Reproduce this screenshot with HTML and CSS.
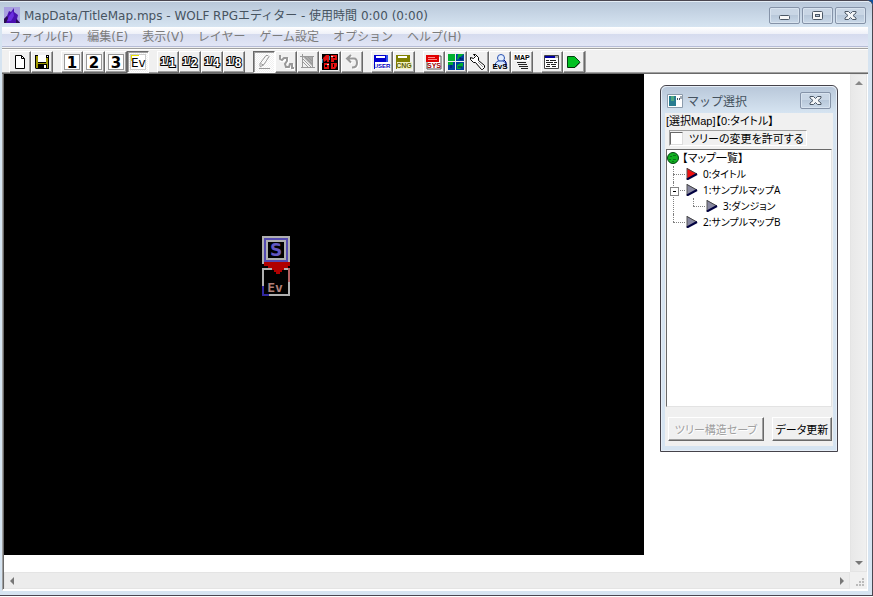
FILE: index.html
```html
<!DOCTYPE html>
<html lang="ja">
<head>
<meta charset="utf-8">
<title>WOLF RPGエディター</title>
<link rel="stylesheet" href="styles.css">
</head>
<body>
<svg class="defs" aria-hidden="true">
  <symbol id="page-arrow" viewBox="0 0 12 12">
    <path d="M1 0v12L11 6z" fill="currentColor"/>
    <path d="M1 0v12" stroke="#555" stroke-width="1"/>
    <path d="M1 0.500L11 6" stroke="#444" stroke-width="1"/>
    <path d="M1 11.500L11 6" stroke="#000040" stroke-width="2"/>
  </symbol>
  <symbol id="close-mark" viewBox="0 0 13 9">
    <path d="M1 .5h3.500l2 2 2-2H12v1.500L9 4.500l3 2.500v1.500H8.500l-2-2-2 2H1V7l3-2.500L1 2z" fill="#f4f6f8" stroke="#4c5866"/>
  </symbol>
</svg>
<div class="window">
  <header class="titlebar">
    <svg class="app-icon" viewBox="0 0 16 16">
      <rect width="16" height="16" fill="#a9a0e0"/>
      <path d="M0 16V12l3-3 2-5 2 1 3-4v4l4 3-1 4 3 4z" fill="#4a10b0"/>
      <path d="M5 9l4-5 1 5-3 5H3z" fill="#6a2de0"/>
      <path d="M0 12l3-3 1 2-2 5H0zM12 12l4 4h-4z" fill="#2a1050"/>
    </svg>
    <h1>MapData/TitleMap.mps - WOLF RPGエディター - 使用時間 0:00 (0:00)</h1>
    <div class="captions">
      <button class="caption" aria-label="最小化"><svg width="13" height="9" viewBox="0 0 13 9"><rect x="1.500" y="4.500" width="10" height="4" rx="1" fill="#f8f8f8" stroke="#4c5866"/></svg></button>
      <button class="caption" aria-label="最大化"><svg width="13" height="9" viewBox="0 0 13 9"><rect x="1.500" y=".5" width="10" height="8" rx="1" fill="#f8f8f8" stroke="#4c5866"/><rect x="4.500" y="3.500" width="4" height="2" fill="#b5c5d8" stroke="#4c5866"/></svg></button>
      <button class="caption" aria-label="閉じる"><svg width="13" height="9"><use href="#close-mark"/></svg></button>
    </div>
  </header>
  <nav class="menubar">
    <a href="#">ファイル(F)</a><a href="#">編集(E)</a><a href="#">表示(V)</a><a href="#">レイヤー</a><a href="#">ゲーム設定</a><a href="#">オプション</a><a href="#">ヘルプ(H)</a>
  </nav>
  <div class="toolbar">
    <div class="group">
      <button class="tool" aria-label="新規"><svg viewBox="0 0 16 16"><path d="M3.500 1.500h6l3 3v10h-9z" fill="#fff" stroke="#000"/><path d="M9.500 1.500v3h3" fill="none" stroke="#000"/></svg></button>
      <button class="tool" aria-label="保存"><svg viewBox="0 0 16 16"><path d="M1 1h14v14H2l-1-1z"/><path d="M2 2h2v7h8V4h2v10H2z" fill="#a09800"/><path d="M4 1h8v7H4z" fill="#fff"/><path d="M4 10h9v5H4z"/><path d="M10 11h2v3h-2zM13 2h1v1h-1z" fill="#fff"/></svg></button>
    </div>
    <div class="group">
      <button class="tool"><span class="digit">1</span></button>
      <button class="tool"><span class="digit">2</span></button>
      <button class="tool"><span class="digit">3</span></button>
      <button class="tool pressed"><span class="digit event">Ev</span></button>
    </div>
    <div class="group">
      <button class="tool"><svg viewBox="0 0 16 16"><text class="scale" x="8" y="11">1/<tspan class="big" dy="2">1</tspan></text></svg></button>
      <button class="tool"><svg viewBox="0 0 16 16"><text class="scale" x="8" y="11">1/<tspan class="big" dy="2">2</tspan></text></svg></button>
      <button class="tool"><svg viewBox="0 0 16 16"><text class="scale" x="8" y="11">1/<tspan class="big" dy="2">4</tspan></text></svg></button>
      <button class="tool"><svg viewBox="0 0 16 16"><text class="scale" x="8" y="11">1/<tspan class="big" dy="2">8</tspan></text></svg></button>
    </div>
    <div class="group">
      <button class="tool pressed" aria-label="鉛筆"><svg viewBox="0 0 16 16"><path d="M3 14.500h11M4 12.500v-3l6-8h2l1 1-5 8-4 2.500M4.500 9.500l3 1.500" fill="none" stroke="#999"/></svg></button>
      <button class="tool" aria-label="直線"><svg viewBox="0 0 16 16"><path d="M2 2v4h3l2-2h2v3l-2 3 1 3h3l1-3h2v4h2" fill="none" stroke="#fff" stroke-width="2" transform="translate(1 1)"/><path d="M2 1v4l2 1 2-2h3v3l-2 3 1 3h3l1-3h2v4h2" fill="none" stroke="#999" stroke-width="2"/></svg></button>
      <button class="tool" aria-label="四角"><svg viewBox="0 0 16 16"><path d="M0 2.500h14M2.500 0v14M12.500 2v12M1 13.500h14" stroke="#999"/><path d="M3 3h9v9z" fill="#aaa"/><path d="M3 5l8 8M3 8l5 5M5 3l7 7M8 3l4 4" stroke="#999"/></svg></button>
      <button class="tool" aria-label="塗りつぶし"><svg viewBox="0 0 16 16"><path d="M0 0h16v16H0z"/><path d="M1 4l3-3h3v7H5V6L2 8zM9 1h6v5h-3v2H9zM2 9h5v6H2zM9 9h6v3l-2 3H9z" fill="#e01010"/><path d="M3 11h2v2H3zM11 3h2v1h-2zM11 10h1v3h-1z"/><path d="M7.500 2v4M.5 5v4" stroke="#28a"/><path d="M9 2h2v1H9zM5 10h2v1H5z" fill="#ddd"/></svg></button>
      <button class="tool" aria-label="元に戻す"><svg viewBox="0 0 16 16"><path d="M3 4.500h7q3 0 3 4.500t-5 4.500M7 1L3 4.500l4 4" fill="none" stroke="#fff" stroke-width="2" transform="translate(1 1)"/><path d="M3 4.500h7q3 0 3 4.500t-5 4.500M7 1L3 4.500l4 4" fill="none" stroke="#999" stroke-width="2"/></svg></button>
    </div>
    <div class="group">
      <button class="tool"><svg viewBox="0 0 16 16"><path d="M0 1h14v14H0z" fill="#0000d0"/><path d="M2 2h9v2H2z" fill="#fff"/><path d="M13 1v8" stroke="#60a0ff"/><path d="M1 8h15v7H1z" fill="#fff"/><text class="tiny blue" x="8" y="14">USER</text></svg></button>
      <button class="tool"><svg viewBox="0 0 16 16"><path d="M0 1h14v14H0z" fill="#808000"/><path d="M2 2h9v2H2z" fill="#fff"/><path d="M1 8h15v7H1z" fill="#f0f0c0"/><text class="tiny olive" x="8" y="14">CNG</text></svg></button>
    </div>
    <div class="group">
      <button class="tool"><svg viewBox="0 0 16 16"><path d="M1 2h14v13H1z" fill="#fff" stroke="#555"/><path d="M0 1h13v7H0z" fill="#e00000"/><path d="M2 3h7v1H2zM2 5h9v1H2z" fill="#f88"/><text class="tiny red" x="8" y="14">SYS</text></svg></button>
      <button class="tool" aria-label="タイルセット"><svg viewBox="0 0 16 16"><path d="M0 0h7v7H0z" fill="#00b030"/><path d="M8 0h8v7H8zM0 8h7v8H0zM8 8h8v8H8z" fill="#0040a0"/><path d="M10 0h6L9 6zM0 8h5v3H0zM9 15v-4l4-2h2v3l-3 3z" fill="#00b030"/><path d="M12 3v2h3M3 14v-3M10 13h4" stroke="#001060" fill="none"/></svg></button>
      <button class="tool" aria-label="ゲーム基本設定"><svg viewBox="0 0 16 16"><path d="M3.500.5h2l3 3v3l6 5v2l-2 2h-1l-6-7h-2l-3-3v-2l3 1 2-2z" fill="#fff" stroke="#000"/><path d="M8 8l5 5" stroke="#999"/></svg></button>
      <button class="tool"><svg viewBox="0 0 16 16"><circle cx="9" cy="4" r="3.500" fill="#e4efff" stroke="#2850b0"/><path d="M3.500 12V9L6 7h5l3 2v4" fill="#d8e7ff" stroke="#2850b0"/><path d="M12 6l2 2v5" stroke="#001080" fill="none"/><text class="tiny evs" x="8" y="15">EvS</text></svg></button>
      <button class="tool"><svg viewBox="0 0 16 16"><path d="M0 0h15v7H0z" fill="#fff"/><text class="tiny" x="8" y="6">MAP</text><path d="M3 8.500h9M4 10.500h9M5 12.500h9M7 14.500h7" stroke="#222"/></svg></button>
    </div>
    <div class="group">
      <button class="tool" aria-label="ログ"><svg viewBox="0 0 16 16"><path d="M.5 1.500h14v13H.5z" fill="#fff" stroke="#444"/><path d="M1 2h10v2H1z" fill="#0000a0"/><path d="M11 2h3v2h-3z" fill="#aaa"/><path d="M2 6.500h3M6 6.500h6M2 8.500h7M10 8.500h3M3 10.500h3M7 10.500h5M2 12.500h4M8 12.500h4" stroke="#222"/></svg></button>
      <button class="tool" aria-label="テストプレイ"><svg viewBox="0 0 16 16"><path d="M1.500 2.500h7l5 5v1l-5 5h-7z" fill="#00c020" stroke="#004010"/><path d="M2 13.500h7l5-5" fill="none" stroke="#003000"/></svg></button>
    </div>
    <span class="rule"></span>
  </div>
  <main class="client">
    <div class="view">
      <div class="map">
        <svg class="sprites" viewBox="0 0 32 64">
          <path d="M2 2h28v28H2z" fill="#b0b0b0"/>
          <path d="M4 4h24v24H4z" fill="#544ab0"/>
          <path d="M6 6h20v20H6z" fill="#b0b0b0"/>
          <path d="M8 8h16v16H8z"/>
          <text class="start" x="16" y="22">S</text>
          <path d="M3 35h26v26H3z" stroke="#b0b0b0" stroke-width="2"/>
          <path d="M3 52v9h6" stroke="#3028a0" stroke-width="2" fill="none"/>
          <path d="M29 34v14" stroke="#b06060" stroke-width="2"/>
          <path d="M4 28h26v4h-2v2h-4v2h-2v2h-2v2h-4v-2h-2v-2h-2v-2H8v-2H4z" fill="#b00000"/>
          <text class="event-mark" x="15" y="58">Ev</text>
        </svg>
      </div>
    </div>
    <div class="scroll vertical"><i class="arrow up"></i><i class="arrow down"></i></div>
    <div class="scroll horizontal"><i class="arrow left"></i><i class="arrow right"></i></div>
    <div class="grip"><svg width="8" height="8" viewBox="0 0 8 8"><path d="M6 0h2v2H6zM6 3h2v2H6zM3 3h2v2H3zM6 6h2v2H6zM3 6h2v2H3zM0 6h2v2H0z" fill="#bbb"/></svg></div>
  </main>
  <section class="dialog">
    <header class="dialog-title">
      <svg class="dialog-icon" viewBox="0 0 16 14"><path d="M.5.5h15v13H.5z" fill="#fff" stroke="#8c9cac"/><path d="M2 2h7v10H2z" fill="#287c90"/><path d="M4 2h3v5H4z" fill="#50a880"/><path d="M10.500 4v2M12.500 4v2M14 2v3" stroke="#456"/></svg>
      <h2>マップ選択</h2>
      <button class="caption" aria-label="閉じる"><svg width="13" height="9"><use href="#close-mark"/></svg></button>
    </header>
    <div class="dialog-body">
      <p class="selected">[選択Map]【0:タイトル】</p>
      <label class="permit"><input type="checkbox">ツリーの変更を許可する</label>
      <div class="tree">
        <div class="root"><svg width="12" height="12" viewBox="0 0 12 12"><circle cx="6" cy="6" r="5.500" fill="#10b020" stroke="#004010"/><path d="M3 4h2v1H3zM6 3h3v1H6zM2 7h2v1H2zM6 7h3v1H6zM5 9h2v1H5z" fill="#087018"/></svg>【マップ一覧】</div>
        <ul>
          <li><div class="node red"><svg class="icon"><use href="#page-arrow"/></svg>0:タイトル</div></li>
          <li><div class="node open"><svg class="icon"><use href="#page-arrow"/></svg>1:サンプルマップA</div>
            <ul><li><div class="node"><svg class="icon"><use href="#page-arrow"/></svg>3:ダンジョン</div></li></ul>
          </li>
          <li><div class="node"><svg class="icon"><use href="#page-arrow"/></svg>2:サンプルマップB</div></li>
        </ul>
      </div>
      <div class="actions">
        <button class="push save" disabled>ツリー構造セーブ</button>
        <button class="push">データ更新</button>
      </div>
    </div>
  </section>
</div>
</body>
</html>
```
FILE: styles.css
```css
* { box-sizing: border-box; }
body {
  margin: 0;
  height: 100vh;
  padding-bottom: 1px;
  overflow: hidden;
  background: linear-gradient(#0a50a0 20px, #fff 20px);
  font-family: "Noto Sans", "Noto Sans CJK JP", sans-serif;
  font-size: 12px;
}
.defs { position: absolute; width: 0; height: 0; }
button { padding: 0; font: inherit; }
h1, h2, p, ul { margin: 0; padding: 0; font-size: 12px; font-weight: normal; }
ul { list-style: none; }

.window {
  position: relative;
  display: flex;
  flex-direction: column;
  height: 100%;
  padding: 0 4px 4px 2px;
  border: solid #4a4650;
  border-width: 1px 1px 1px 0;
  border-radius: 0 6px 0 0;
  background: #d6e4f1;
}
.titlebar, .menubar { font-family: "DejaVu Sans", "Noto Sans CJK JP", sans-serif; }
.titlebar {
  display: flex;
  align-items: center;
  flex: 0 0 26px;
  gap: 4px;
  margin: 0 -4px 0 -2px;
  padding: 0 6px 0 4px;
  border-top: 1px solid #e4edf6;
  border-radius: 0 5px 0 0;
  background: linear-gradient(#b9c8da, #d6e4f1);
  color: #46535f;
}
.titlebar h1 { flex: 1; white-space: nowrap; }
.app-icon { width: 16px; height: 16px; }
.captions { display: flex; gap: 2px; padding-top: 2px; }
.caption {
  display: flex;
  align-items: center;
  justify-content: center;
  width: 31px;
  height: 17px;
  border: 1px solid #8593a8;
  border-radius: 2px;
  background: linear-gradient(#c9d6e5 50%, #b8c8da 50%, #c9d8e8);
  box-shadow: inset 0 0 0 1px #d8e3ef;
}

.menubar {
  display: flex;
  align-items: center;
  flex: 0 0 20px;
  gap: 14px;
  padding: 0 0 2px 7px;
  border-bottom: 1px solid #b6bcd6;
  background: linear-gradient(#fff, #eef0f8 7px, #d5dbee 7px, #e2e6f6);
}
.menubar a { color: #7c7c7c; text-decoration: none; white-space: nowrap; }

.toolbar {
  display: flex;
  align-items: flex-start;
  flex: 0 0 26px;
  gap: 8px;
  padding: 2px 0 0 7px;
  border: solid #a0a0a0;
  border-width: 1px 0;
  border-bottom-color: #696969;
  background: #f0f0f0;
  box-shadow: inset 0 1px #fff, inset 0 -1px #a0a0a0, 0 -1px #f0f0f0;
  margin-top: 1px;
}
.group { display: flex; }
.tool {
  display: flex;
  align-items: center;
  justify-content: center;
  width: 22px;
  height: 22px;
  border: 1px solid;
  border-color: #fff #696969 #696969 #fff;
  background: #f0f0f0;
  box-shadow: inset -1px -1px #a0a0a0;
}
.tool svg { width: 16px; height: 16px; overflow: visible; }
.tool.pressed {
  border-color: #696969 #fff #fff #696969;
  background: repeating-conic-gradient(#fff 0 25%, #f0f0f0 0 50%) 0 0 / 2px 2px;
  box-shadow: inset 1px 1px #a0a0a0;
}
.digit {
  width: 16px;
  height: 16px;
  border: 1px solid #999;
  background: #fff;
  color: #000;
  font: bold 15px/16px "DejaVu Sans", sans-serif;
}
.event {
  border-color: #ccc;
  background: linear-gradient(#e8e000, #e8e000) 0 0 / 8px 1px no-repeat, linear-gradient(#e8e000, #e8e000) 0 0 / 1px 6px no-repeat, #fff;
  font: 12px/16px "DejaVu Sans", sans-serif;
}
.scale {
  fill: #fff;
  stroke: #000;
  stroke-width: 2px;
  paint-order: stroke;
  text-anchor: middle;
  font: bold 10px "Liberation Sans", sans-serif;
}
.big { font-size: 12px; }
.tiny { font: bold 7px "Liberation Sans", sans-serif; text-anchor: middle; }
.blue { fill: #0000c0; font-size: 6px; }
.olive { fill: #606000; }
.red { fill: #a00000; }
.evs { font-size: 8px; }
.rule { align-self: stretch; width: 1px; margin-left: -8px; background: #a0a0a0; }

.client {
  display: grid;
  flex: 1;
  grid-template: 1fr 17px / 1fr 17px;
  min-height: 0;
  padding-left: 1px;
  border: solid #fff;
  border-width: 0 1px 2px;
  border-left-color: #a0a0a0;
  box-shadow: inset 1px 0 #696969;
}
.view { overflow: hidden; background: #fff; }
.map {
  --tile: 32px;
  position: relative;
  width: calc(20 * var(--tile));
  height: calc(15 * var(--tile) + 1px);
  background: #000;
}
.sprites {
  position: absolute;
  left: calc(8 * var(--tile));
  top: calc(5 * var(--tile));
  width: var(--tile);
  height: calc(2 * var(--tile));
  shape-rendering: crispEdges;
}
.start { fill: #6258c0; font: bold 17px "DejaVu Sans", sans-serif; text-anchor: middle; }
.event-mark { fill: #b08078; font: bold 13px "DejaVu Sans Mono", monospace; text-anchor: middle; }
.scroll {
  display: flex;
  align-items: center;
  justify-content: space-between;
  border: 1px solid #e4e4e4;
  background: linear-gradient(90deg, #e8e8e8, #f0f0f0);
}
.vertical { flex-direction: column; padding: 6px 0; }
.horizontal { padding: 0 5px; background: #ececec; }
.arrow { border: 4px solid transparent; }
.up { border-top: 0; border-bottom-color: #888; }
.down { border-bottom: 0; border-top-color: #777; }
.left { border-left: 0; border-right-color: #777; }
.right { border-right: 0; border-left-color: #777; }
.grip { display: flex; align-items: flex-end; justify-content: flex-end; padding: 3px; background: #f0f0f0; }

.dialog {
  position: absolute;
  top: 84px;
  right: 34px;
  width: 178px;
  padding: 0 4px 5px;
  border: 1px solid #45424a;
  border-radius: 6px 6px 0 0;
  background: #d6e4f1;
  box-shadow: inset 0 0 0 1px #e6eef7;
  font-size: 11px;
  font-feature-settings: "palt";
}
.dialog-title {
  display: flex;
  align-items: center;
  gap: 4px;
  height: 27px;
  margin: 0 -3px;
  padding: 1px 5px 0 5px;
  border-top: 1px solid #e6eef7;
  border-radius: 5px 5px 0 0;
  background: linear-gradient(#b9c8da, #d6e4f1);
}
.dialog-title h2 { flex: 1; color: #46535f; font-feature-settings: normal; }
.dialog-icon { width: 16px; height: 14px; }
.dialog-body { padding: 0 1px; background: #f0f0f0; }
.selected { height: 17px; font-size: 11px; line-height: 17px; white-space: nowrap; font-family: "Liberation Sans", "Noto Sans CJK JP", sans-serif; }
.permit {
  display: flex;
  align-items: center;
  gap: 6px;
  width: 138px;
  height: 16px;
  margin: 0 0 3px 3px;
  border: 1px solid;
  border-color: #a0a0a0 #fff #fff #a0a0a0;
  white-space: nowrap;
}
.permit input {
  appearance: none;
  width: 13px;
  height: 13px;
  margin: 0;
  border: 1px solid;
  border-color: #696969 #ddd #ddd #696969;
  background: #fff;
}
.tree {
  height: 258px;
  border: 1px solid;
  border-color: #696969 #e3e3e3 #e3e3e3 #696969;
  background: #fff;
  line-height: 16px;
  white-space: nowrap;
}
.root { display: flex; align-items: center; gap: 3px; height: 16px; }
.tree ul { margin-left: 6px; }
.tree ul ul { margin-left: 20px; }
.tree li { position: relative; }
.tree li::before {
  content: "";
  position: absolute;
  top: 0;
  bottom: 0;
  left: 0;
  border-left: 1px dotted #808080;
}
.tree li:last-child::before { bottom: auto; height: 8px; }
.node {
  position: relative;
  display: flex;
  align-items: center;
  gap: 5px;
  height: 16px;
  padding-left: 13px;
  color: #000;
  font-size: 10px;
}
.node::before {
  content: "";
  position: absolute;
  left: 0;
  top: 8px;
  width: 12px;
  border-top: 1px dotted #808080;
}
.open::after {
  content: "";
  position: absolute;
  left: -3px;
  top: 5px;
  width: 7px;
  height: 7px;
  border: 1px solid #848484;
  background: linear-gradient(#000, #000) center / 3px 1px no-repeat #fff;
}
.icon { width: 12px; height: 12px; color: #8888a0; }
.red .icon { color: #f01010; }
.actions { display: flex; justify-content: space-between; padding: 10px 0 5px 2px; }
.push {
  width: 60px;
  height: 24px;
  border: 1px solid;
  border-color: #fff #696969 #696969 #fff;
  background: #f0f0f0;
  box-shadow: inset -1px -1px #a0a0a0;
  color: #000;
  white-space: nowrap;
}
.save { width: 96px; color: #a0a0a0; text-shadow: 1px 1px #fff; }
```
